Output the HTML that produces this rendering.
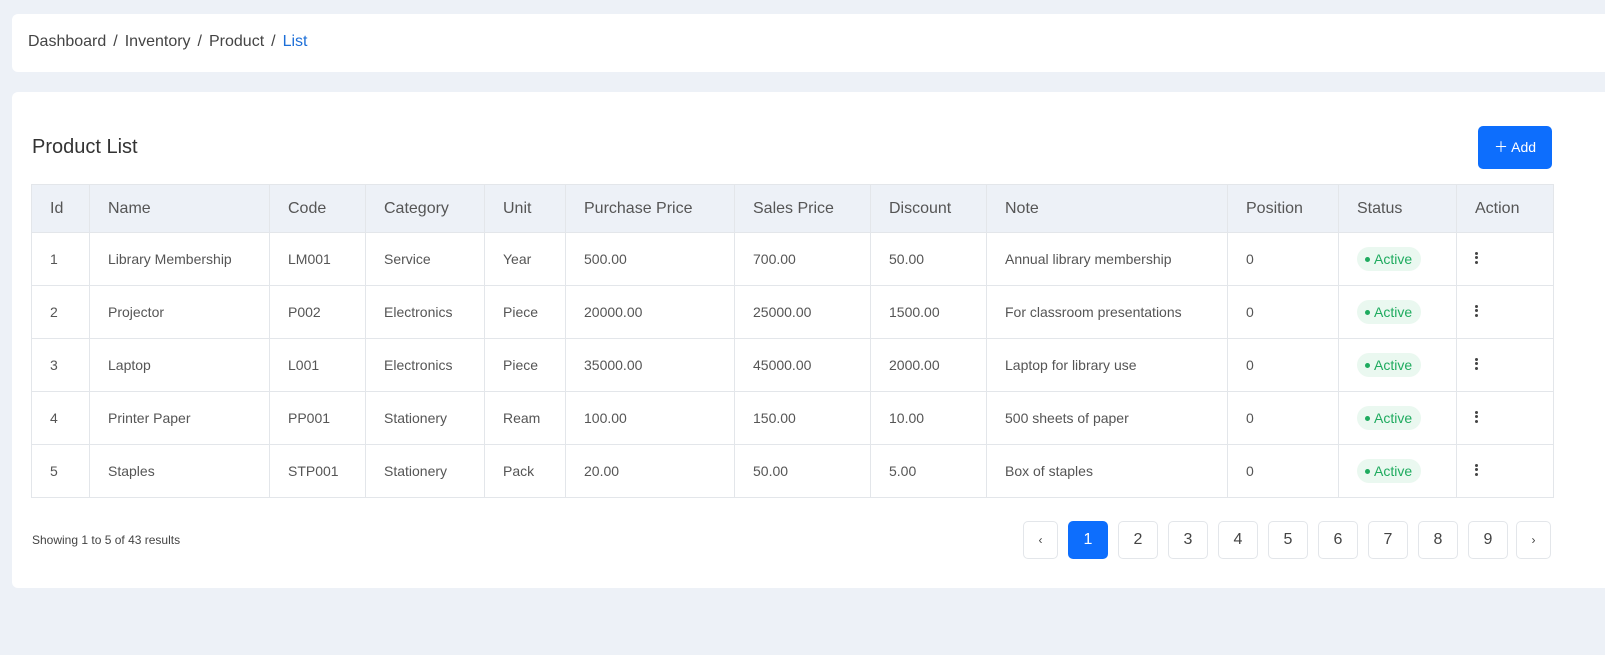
<!DOCTYPE html>
<html><head><style>
*{box-sizing:border-box;margin:0;padding:0}
body{width:1605px;height:655px;background:#edf1f7;font-family:"Liberation Sans",sans-serif;position:relative;overflow:hidden;color:#555}
.card{position:absolute;background:#fff;border-radius:6px;left:12px;width:1610px}
.bc{top:14px;height:58px;font-size:16px;color:#444;padding:19px 0 0 16px}
.bc span{margin:0 7px}
.bc .cur{color:#1d6fd8}
.main{top:92px;height:496px}
h2{position:absolute;left:20px;top:44px;font-size:20px;font-weight:normal;color:#333}
.add{position:absolute;left:1466px;top:34px;width:74px;height:43px;background:#0d6efd;border-radius:5px;color:#fff;font-size:14px;line-height:43px;text-align:center}
table{position:absolute;left:19px;top:92px;border-collapse:collapse;font-size:14px;table-layout:fixed;width:1522px}
td,th{border:1px solid #e3e6ea;padding:0 0 0 18px;text-align:left;color:#555;font-weight:normal}
th{background:#edf1f7;height:48px;font-size:16px;color:#555}
td{height:53px}
.badge{display:inline-block;background:#eaf8f0;color:#1fab5f;border-radius:12px;padding:4px 9px 4px 8px;font-size:14px}
.badge b{display:inline-block;width:5px;height:5px;border-radius:50%;background:#1fab5f;vertical-align:middle;margin-right:4px;position:relative;top:-1px}
.dots{font-weight:bold;font-size:14px;letter-spacing:0;line-height:4px;display:inline-block;width:4px}
.dots i{display:block;width:3px;height:3px;background:#444;border-radius:50%;margin:1.5px 0}
.info{position:absolute;left:20px;top:441px;font-size:12px;color:#444}
.pg{position:absolute;top:429px;height:38px;border:1px solid #e3e6ea;border-radius:5px;text-align:center;line-height:36px;font-size:16px;color:#444}
.pg.a{background:#0d6efd;color:#fff;border-color:#0d6efd}
</style></head><body>
<div class="card bc">Dashboard<span>/</span>Inventory<span>/</span>Product<span>/</span><a class="cur">List</a></div>
<div class="card main">
<h2>Product List</h2>
<div class="add">＋ Add</div>
<table>
<colgroup><col style="width:58px"><col style="width:180px"><col style="width:96px"><col style="width:119px"><col style="width:81px"><col style="width:169px"><col style="width:136px"><col style="width:116px"><col style="width:241px"><col style="width:111px"><col style="width:118px"><col style="width:97px"></colgroup>
<tr><th>Id</th><th>Name</th><th>Code</th><th>Category</th><th>Unit</th><th>Purchase Price</th><th>Sales Price</th><th>Discount</th><th>Note</th><th>Position</th><th>Status</th><th>Action</th></tr>
<tr><td>1</td><td>Library Membership</td><td>LM001</td><td>Service</td><td>Year</td><td>500.00</td><td>700.00</td><td>50.00</td><td>Annual library membership</td><td>0</td><td><span class="badge"><b></b>Active</span></td><td><span class="dots"><i></i><i></i><i></i></span></td></tr>
<tr><td>2</td><td>Projector</td><td>P002</td><td>Electronics</td><td>Piece</td><td>20000.00</td><td>25000.00</td><td>1500.00</td><td>For classroom presentations</td><td>0</td><td><span class="badge"><b></b>Active</span></td><td><span class="dots"><i></i><i></i><i></i></span></td></tr>
<tr><td>3</td><td>Laptop</td><td>L001</td><td>Electronics</td><td>Piece</td><td>35000.00</td><td>45000.00</td><td>2000.00</td><td>Laptop for library use</td><td>0</td><td><span class="badge"><b></b>Active</span></td><td><span class="dots"><i></i><i></i><i></i></span></td></tr>
<tr><td>4</td><td>Printer Paper</td><td>PP001</td><td>Stationery</td><td>Ream</td><td>100.00</td><td>150.00</td><td>10.00</td><td>500 sheets of paper</td><td>0</td><td><span class="badge"><b></b>Active</span></td><td><span class="dots"><i></i><i></i><i></i></span></td></tr>
<tr><td>5</td><td>Staples</td><td>STP001</td><td>Stationery</td><td>Pack</td><td>20.00</td><td>50.00</td><td>5.00</td><td>Box of staples</td><td>0</td><td><span class="badge"><b></b>Active</span></td><td><span class="dots"><i></i><i></i><i></i></span></td></tr>
</table>
<div class="info">Showing 1 to 5 of 43 results</div>
<div class="pg" style="left:1011px;width:35px;font-size:12px">‹</div>
<div class="pg a" style="left:1056px;width:40px">1</div>
<div class="pg" style="left:1106px;width:40px">2</div>
<div class="pg" style="left:1156px;width:40px">3</div>
<div class="pg" style="left:1206px;width:40px">4</div>
<div class="pg" style="left:1256px;width:40px">5</div>
<div class="pg" style="left:1306px;width:40px">6</div>
<div class="pg" style="left:1356px;width:40px">7</div>
<div class="pg" style="left:1406px;width:40px">8</div>
<div class="pg" style="left:1456px;width:40px">9</div>
<div class="pg" style="left:1504px;width:35px;font-size:12px">›</div>
</div>
</body></html>
